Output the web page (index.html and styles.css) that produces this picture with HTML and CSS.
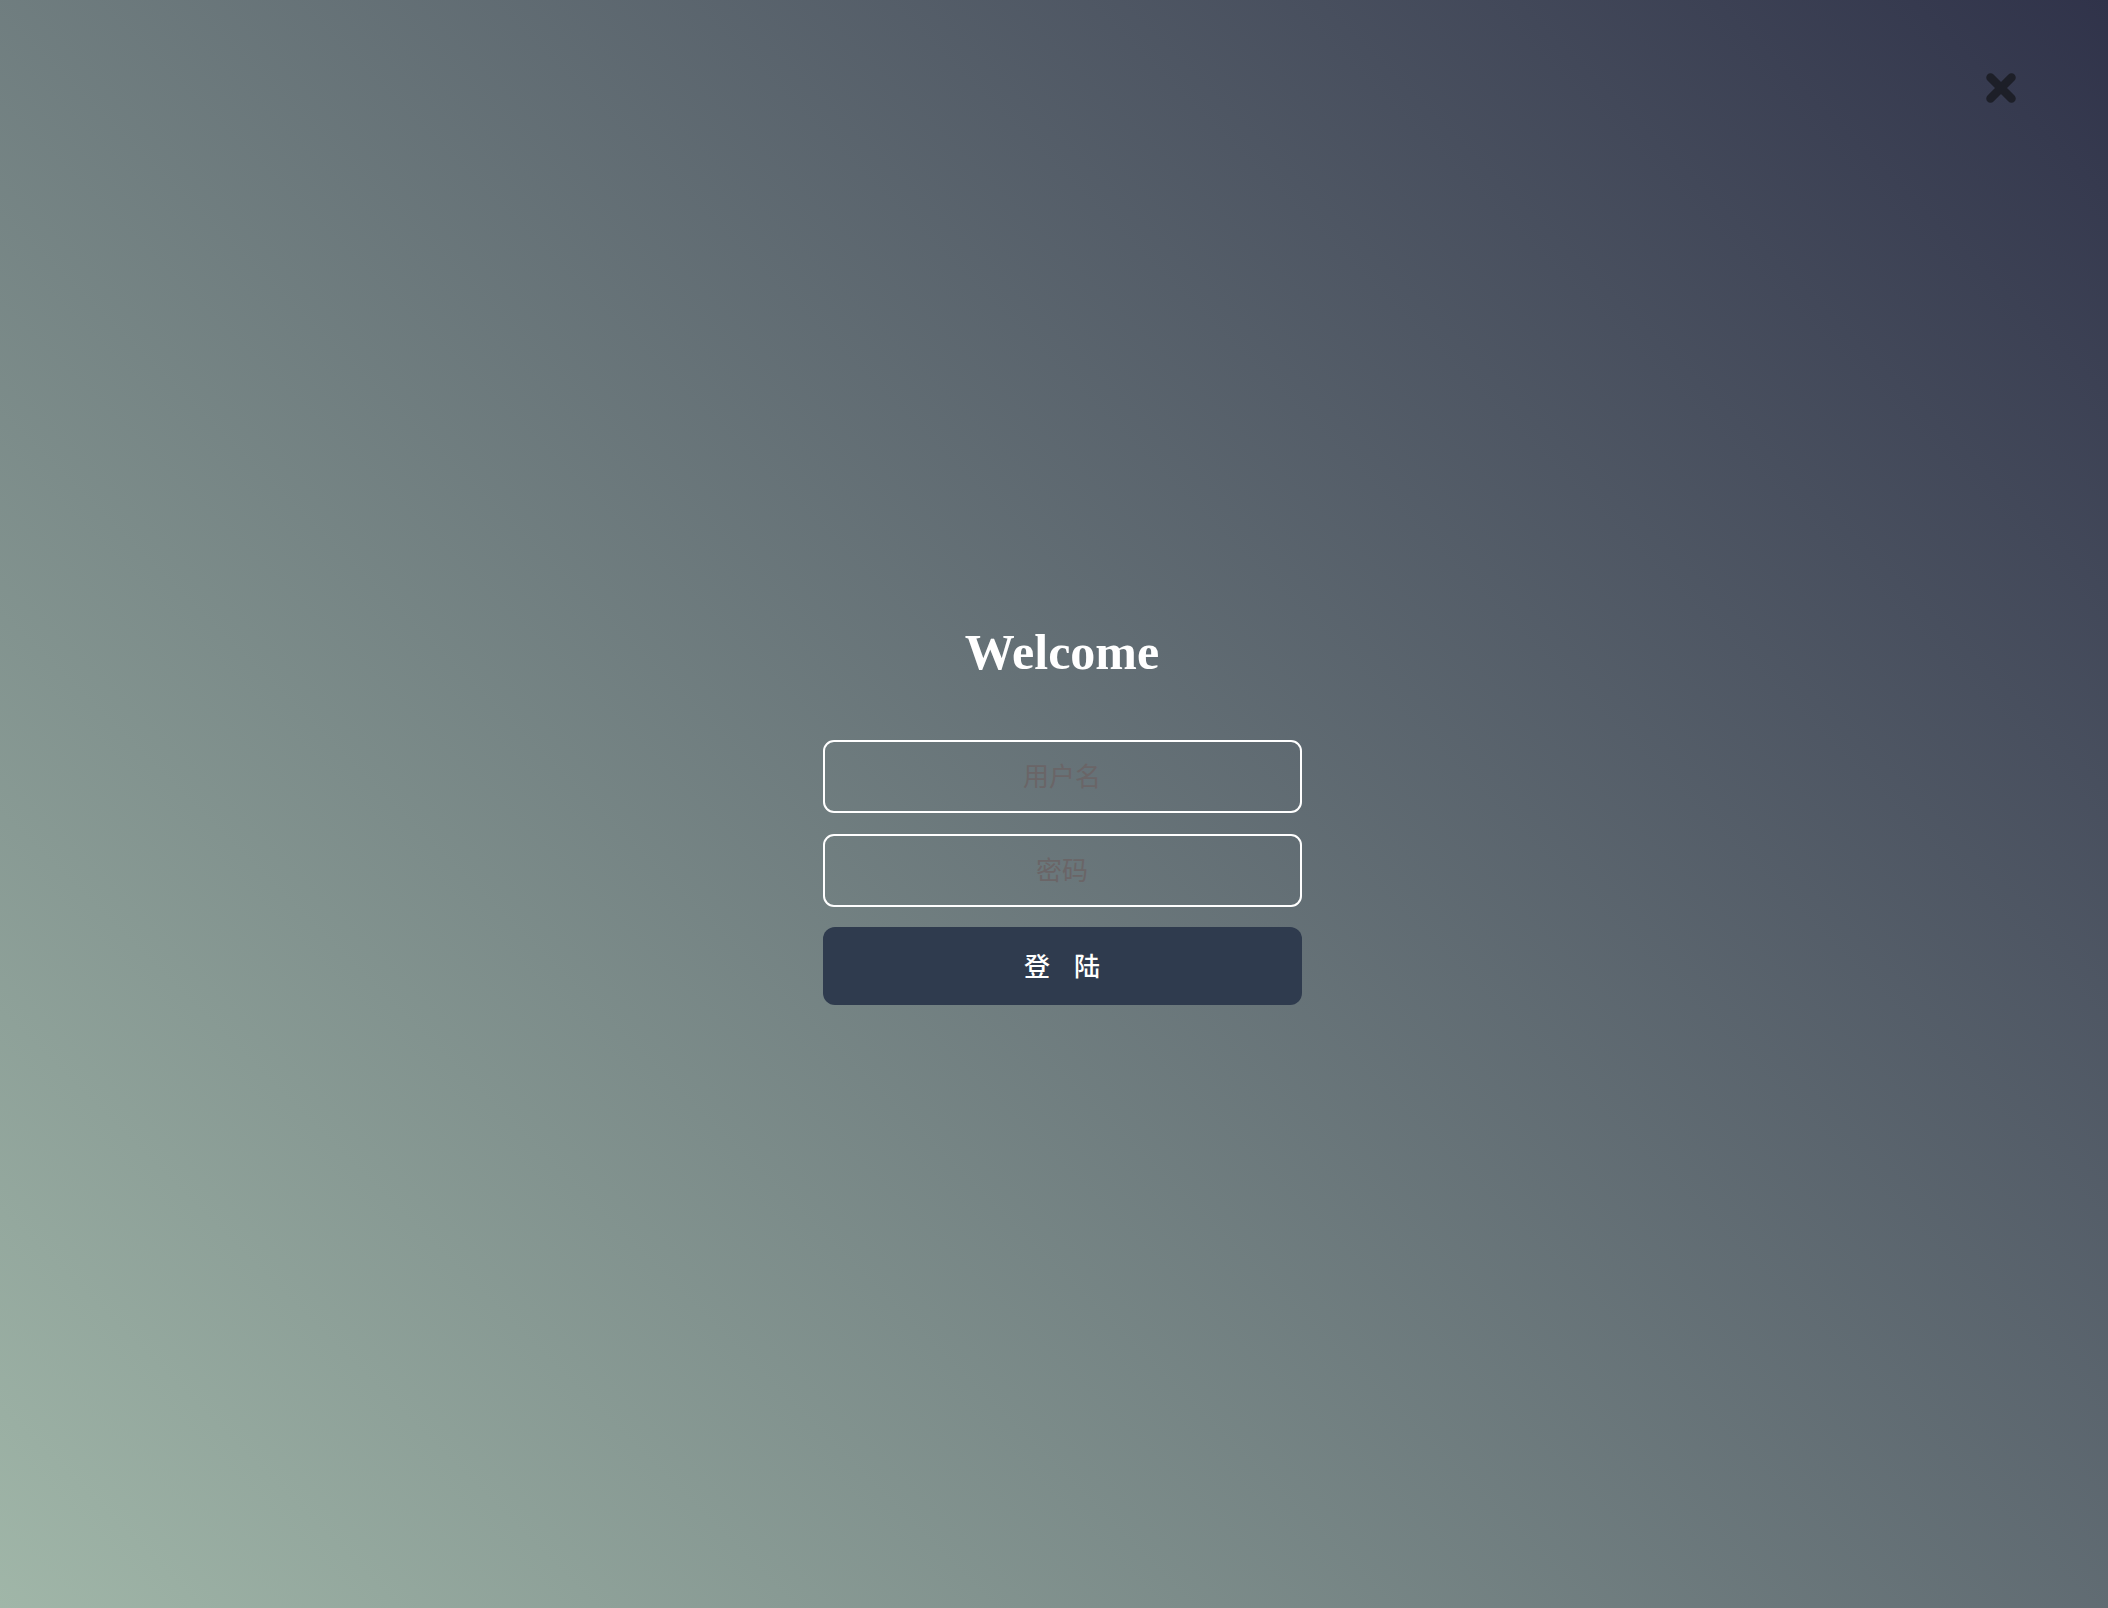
FILE: index.html
```html
<!DOCTYPE html>
<html lang="zh">
<head>
<meta charset="utf-8">
<title>Welcome</title>
<link rel="stylesheet" href="styles.css">
</head>
<body>
<button class="close" type="button" aria-label="close">
  <svg viewBox="0 0 32 32" width="32" height="32">
    <path d="M5.5 5.5 L26.5 26.5 M26.5 5.5 L5.5 26.5" stroke="#1d1f28" stroke-width="8.5" stroke-linecap="round" fill="none"/>
  </svg>
</button>
<main class="page">
  <form class="login">
    <h1 class="title">Welcome</h1>
    <input class="field" type="text" placeholder="用户名">
    <input class="field" type="password" placeholder="密码">
    <button class="submit" type="button">登 陆</button>
  </form>
</main>
</body>
</html>
```

FILE: styles.css
```css
html, body {
  margin: 0;
  padding: 0;
  height: 100%;
}
body {
  background: linear-gradient(45deg, #a0b6a8 0%, #30334a 100%);
  background-attachment: fixed;
  min-height: 100vh;
  font-family: "Noto Sans CJK SC", "Noto Sans", sans-serif;
  overflow: hidden;
}
.close {
  position: absolute;
  top: 72px;
  right: 91px;
  width: 32px;
  height: 32px;
  padding: 0;
  border: 0;
  background: none;
  cursor: pointer;
}
.close svg { display: block; }
.page {
  display: flex;
  flex-direction: column;
  align-items: center;
  padding-top: 623px;
  padding-left: 16px;
  box-sizing: border-box;
}
.login {
  display: flex;
  flex-direction: column;
  align-items: center;
  width: 479px;
}
.title {
  margin: 0 0 59px;
  font-family: "Liberation Serif", "Times New Roman", serif;
  font-weight: bold;
  font-size: 50px;
  line-height: 58px;
  color: #ffffff;
}
.field {
  box-sizing: border-box;
  width: 479px;
  height: 73px;
  margin: 0 0 21px;
  padding: 0 0 4px;
  border: 2px solid #ffffff;
  border-radius: 11px;
  background: transparent;
  text-align: center;
  font-family: "Noto Sans CJK SC", sans-serif;
  font-size: 26px;
  color: #ffffff;
  outline: none;
}
.field + .field { margin-bottom: 20px; }
.field::placeholder {
  color: #6a6567;
  opacity: 1;
}
.submit {
  box-sizing: border-box;
  width: 479px;
  height: 78px;
  border: 0;
  border-radius: 12px;
  background: #2f3b4e;
  color: #ffffff;
  font-family: "Noto Sans CJK SC", sans-serif;
  font-size: 26px;
  font-weight: 500;
  letter-spacing: 9px;
  padding: 0 0 4px 9px;
  cursor: pointer;
}
```
